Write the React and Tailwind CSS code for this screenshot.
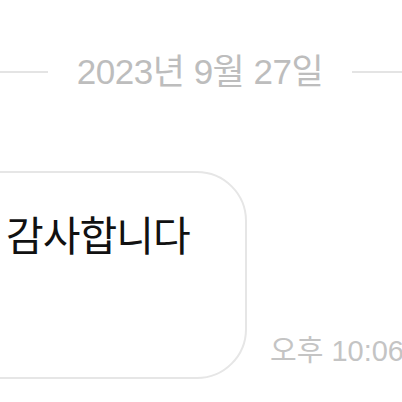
import React from 'react';

const App = () => {
  return (
    <div className="w-[402px] h-[402px] overflow-hidden bg-white" style={{ fontFamily: '"Liberation Sans", "Noto Sans CJK KR", sans-serif' }}>
      {/* Date divider */}
      <div className="flex items-center pt-[52px]">
        <div className="w-[48px] h-[2px] bg-[#e4e4e4]" />
        <span className="mx-auto text-[35px] leading-[40px] text-[#bdbdbd] tracking-[-0.5px]">2023년 9월 27일</span>
        <div className="w-[50px] h-[2px] bg-[#e4e4e4]" />
      </div>

      {/* Message row */}
      <div className="flex items-end mt-[79px]">
        <div className="-ml-[50px] w-[297px] h-[208px] shrink-0 rounded-[50px] border-2 border-[#e6e6e6] bg-white pl-[54px] pt-[38px]">
          <p className="text-[41px] leading-[52px] text-[#111] tracking-[-1px]">감사합니다</p>
        </div>
        <span className="ml-[23px] mb-[11px] whitespace-nowrap text-[29px] leading-[34px] text-[#c4c4c4]">오후 10:06</span>
      </div>
    </div>
  );
};

export default App;
